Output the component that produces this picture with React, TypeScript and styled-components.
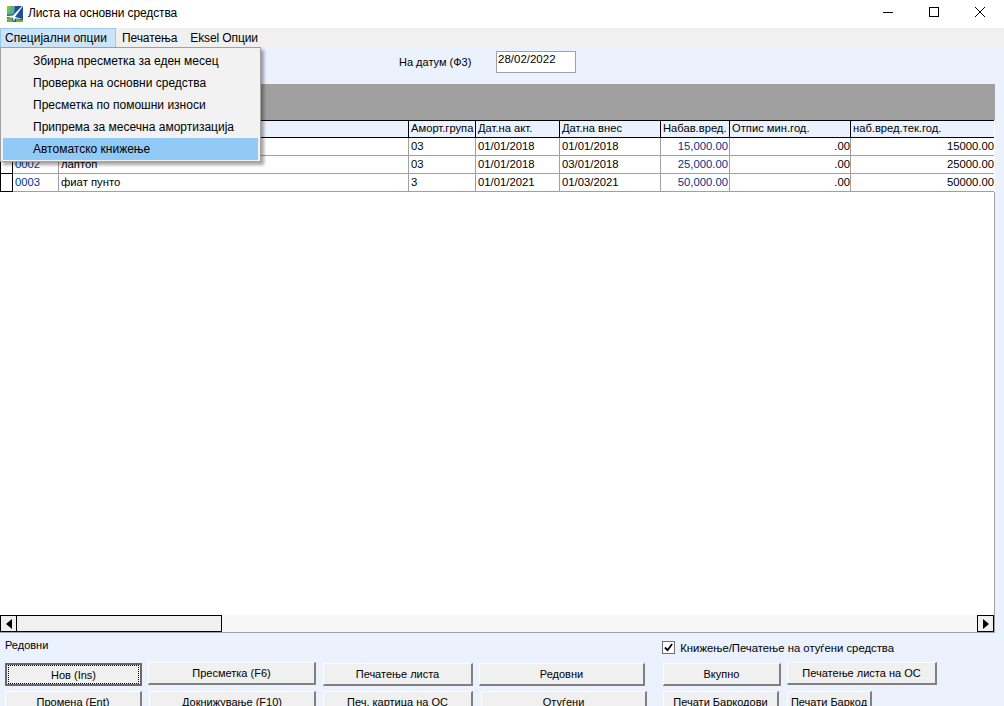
import React from 'react';
import styled, { createGlobalStyle } from 'styled-components';

const FONT = '"Liberation Sans", Arial, sans-serif';
const FORM_BG = '#ebf2fe';
const GRID_LINE = '#a0a0a0';
const CODE_BLUE = '#00358f';

const columns = [
  { title: 'Аморт.група', width: 67 },
  { title: 'Дат.на акт.', width: 84 },
  { title: 'Дат.на внес', width: 101 },
  { title: 'Набав.вред.', width: 69 },
  { title: 'Отпис мин.год.', width: 121 },
  { title: 'наб.вред.тек.год.', width: 143 },
];

const rows = [
  { code: '0001', name: '', group: '03', act: '01/01/2018', entry: '01/01/2018', value: '15,000.00', writeOff: '.00', current: '15000.00' },
  { code: '0002', name: 'лаптоп', group: '03', act: '01/01/2018', entry: '03/01/2018', value: '25,000.00', writeOff: '.00', current: '25000.00' },
  { code: '0003', name: 'фиат пунто', group: '3', act: '01/01/2021', entry: '01/03/2021', value: '50,000.00', writeOff: '.00', current: '50000.00' },
];

const menuItems = [
  'Збирна пресметка за еден месец',
  'Проверка на основни средства',
  'Пресметка по помошни износи',
  'Припрема за месечна амортизација',
  'Автоматско книжење',
];

export default function App() {
  return (
    <Window>
      <GlobalStyle />
      <TitleBar>
        <AppLogo viewBox="0 0 16 16">
          <rect width="16" height="16" fill="#1c4f9c" />
          <path d="M0 0 H8 L7 8 L0 9 Z" fill="#5aa9a0" />
          <path d="M0 0 H4 L3 6 L0 7 Z" fill="#7fc241" />
          <path d="M0 16 V12 L5 12 L6 16 Z" fill="#6bb536" />
          <path d="M9 16 L9 13 L16 14 V16 Z" fill="#6bb536" />
          <path d="M0 10 L6 9.5 L15 0 L16 0 L8 11 L16 13 L8 12.5 L7 16 L6 12 L0 11 Z" fill="#ffffff" />
        </AppLogo>
        <TitleText>Листа на основни средства</TitleText>
        <WindowControls>
          <ControlIcon viewBox="0 0 10 10">
            <path d="M0 5.5 H10" />
          </ControlIcon>
          <ControlIcon viewBox="0 0 10 10">
            <rect x="0.5" y="0.5" width="9" height="9" />
          </ControlIcon>
          <ControlIcon viewBox="0 0 10 10">
            <path d="M0 0 L10 10 M10 0 L0 10" />
          </ControlIcon>
        </WindowControls>
      </TitleBar>

      <MenuBar>
        <MenuTitle active>Специјални опции</MenuTitle>
        <MenuTitle>Печатења</MenuTitle>
        <MenuTitle>Eksel Опции</MenuTitle>
      </MenuBar>

      <DropMenu>
        {menuItems.map((item, i) => (
          <DropItem key={item} selected={i === menuItems.length - 1}>
            {item}
          </DropItem>
        ))}
      </DropMenu>

      <Form>
        <DateRow>
          <DateLabel>На датум (Ф3)</DateLabel>
          <DateInput>28/02/2022</DateInput>
        </DateRow>

        <Grid>
          <GrayBand />
          <HeaderRow>
            <HeaderSelector />
            <HeaderCell width={46} />
            <HeaderCell width={350} />
            {columns.map((col) => (
              <HeaderCell key={col.title} width={col.width}>
                {col.title}
              </HeaderCell>
            ))}
          </HeaderRow>
          {rows.map((row) => (
            <DataRow key={row.code}>
              <RowSelector />
              <Cell width={46} color={CODE_BLUE}>
                {row.code}
              </Cell>
              <Cell width={350}>{row.name}</Cell>
              <Cell width={67}>{row.group}</Cell>
              <Cell width={84}>{row.act}</Cell>
              <Cell width={101}>{row.entry}</Cell>
              <Cell width={69} right padRight={1} color={CODE_BLUE}>
                {row.value}
              </Cell>
              <Cell width={121} right>
                {row.writeOff}
              </Cell>
              <Cell width={143} right>
                {row.current}
              </Cell>
            </DataRow>
          ))}
          <GridEmpty />
          <ScrollBar>
            <ScrollButton>
              <Arrow viewBox="0 0 6 10">
                <path d="M6 0 V10 L0 5 Z" />
              </Arrow>
            </ScrollButton>
            <ScrollThumb />
            <ScrollTrack />
            <ScrollButton>
              <Arrow viewBox="0 0 6 10">
                <path d="M0 0 V10 L6 5 Z" />
              </Arrow>
            </ScrollButton>
          </ScrollBar>
        </Grid>

        <Footer>
          <StatusRow>
            <StatusText>Редовни</StatusText>
            <CheckLabel>
              <CheckBox>
                <svg viewBox="0 0 10 10" width="9" height="9">
                  <path d="M1 5 L4 8 L9 1" fill="none" stroke="#000" strokeWidth="2" />
                </svg>
              </CheckBox>
              Книжење/Печатење на отуѓени средства
            </CheckLabel>
          </StatusRow>
          <ButtonRow>
            <PushButton width={137} focused>
              <FocusText>Нов (Ins)</FocusText>
            </PushButton>
            <PushButton width={168} gap={6} raised>Пресметка (F6)</PushButton>
            <PushButton width={150} gap={7}>Печатење листа</PushButton>
            <PushButton width={166} gap={6}>Редовни</PushButton>
            <PushButton width={118} gap={18}>Вкупно</PushButton>
            <PushButton width={150} gap={6} raised>Печатење листа на ОС</PushButton>
          </ButtonRow>
          <ButtonRow>
            <PushButton width={137}>Промена (Ent)</PushButton>
            <PushButton width={167} gap={7}>Докнижување (F10)</PushButton>
            <PushButton width={150} gap={7}>Печ. картица на ОС</PushButton>
            <PushButton width={166} gap={8}>Отуѓени</PushButton>
            <PushButton width={116} gap={16}>Печати Баркодови</PushButton>
            <PushButton width={85} gap={8}>Печати Баркод</PushButton>
          </ButtonRow>
        </Footer>
      </Form>
    </Window>
  );
}

const GlobalStyle = createGlobalStyle`
  html, body {
    margin: 0;
    padding: 0;
    height: 100%;
    overflow: hidden;
    background: #ffffff;
  }
  #root {
    height: 100%;
  }
`;

const Window = styled.div`
  position: relative;
  width: 1004px;
  height: 706px;
  overflow: hidden;
  display: flex;
  flex-direction: column;
  font-family: ${FONT};
  font-size: 12px;
  color: #000;
  background: #fff;
`;

const TitleBar = styled.div`
  height: 28px;
  flex: none;
  display: flex;
  align-items: center;
  padding-left: 7px;
  background: #fff;
`;

const AppLogo = styled.svg`
  width: 16px;
  height: 16px;
  margin-right: 5px;
  margin-top: -1px;
`;

const TitleText = styled.span`
  font-size: 12px;
  letter-spacing: -0.12px;
  margin-top: -2px;
`;

const WindowControls = styled.div`
  margin-left: auto;
  display: flex;
  align-items: center;
  margin-top: -4px;
  padding-right: 19px;
  gap: 36px;
`;

const ControlIcon = styled.svg`
  width: 10px;
  height: 10px;
  fill: none;
  stroke: #000;
  stroke-width: 1;
  overflow: visible;
`;

const MenuBar = styled.div`
  height: 20px;
  flex: none;
  display: flex;
  background: #f0f0f0;
`;

const MenuTitle = styled.div<{ active?: boolean }>`
  display: flex;
  align-items: center;
  padding: 0 6px 0 ${(p) => (p.active ? '4px' : '5px')};
  box-sizing: border-box;
  letter-spacing: -0.1px;
  background: ${(p) => (p.active ? '#cce4f7' : 'transparent')};
  border: 1px solid ${(p) => (p.active ? '#99c9ef' : 'transparent')};
  &:first-child {
    width: 116px;
    letter-spacing: 0;
  }
`;

const DropMenu = styled.div`
  position: absolute;
  left: 0;
  top: 47px;
  width: 261px;
  height: 115px;
  box-sizing: border-box;
  padding: 2px;
  background: #f2f2f2;
  border: 1px solid #a0a0a0;
  box-shadow: 3px 3px 3px rgba(0, 0, 0, 0.35);
  z-index: 2;
`;

const DropItem = styled.div<{ selected?: boolean }>`
  height: 22px;
  line-height: 22px;
  padding-left: 30px;
  background: ${(p) => (p.selected ? '#91c9f7' : 'transparent')};
`;

const Form = styled.div`
  flex: 1;
  min-height: 0;
  display: flex;
  flex-direction: column;
  font-size: 11px;
  background: ${FORM_BG};
`;

const DateRow = styled.div`
  height: 36px;
  flex: none;
  display: flex;
  align-items: flex-start;
  padding: 3px 0 0 399px;
  box-sizing: border-box;
`;

const DateLabel = styled.span`
  width: 97px;
  margin-top: 5px;
`;

const DateInput = styled.div`
  width: 80px;
  height: 22px;
  box-sizing: border-box;
  padding: 0 1px;
  line-height: 15px;
  font-size: 11.5px;
  background: #fff;
  border: 1px solid #a0a0a0;
`;

const Grid = styled.div`
  width: 995px;
  height: 549px;
  flex: none;
  display: flex;
  flex-direction: column;
  background: #fff;
  border-bottom: 1px solid ${GRID_LINE};
  box-sizing: border-box;
`;

const GrayBand = styled.div`
  height: 36px;
  flex: none;
  background: #a0a0a0;
`;

const HeaderRow = styled.div`
  height: 18px;
  flex: none;
  width: 994px;
  display: flex;
  box-sizing: border-box;
  background: ${FORM_BG};
  border-top: 1px solid #000;
  border-bottom: 1px solid #000;
`;

const HeaderSelector = styled.div`
  width: 13px;
  flex: none;
  box-sizing: border-box;
  border-left: 1px solid #000;
  border-right: 1px solid #000;
`;

const HeaderCell = styled.div<{ width: number }>`
  width: ${(p) => p.width}px;
  flex: none;
  box-sizing: border-box;
  padding-left: 2px;
  line-height: 15px;
  font-size: 11.2px;
  white-space: nowrap;
  overflow: hidden;
  border-right: 1px solid #000;
  &:last-child {
    border-right: 0;
  }
`;

const DataRow = styled.div`
  height: 18px;
  flex: none;
  width: 994px;
  display: flex;
  box-sizing: border-box;
  border-bottom: 1px solid ${GRID_LINE};
`;

const RowSelector = styled.div`
  width: 13px;
  margin-bottom: -1px;
  flex: none;
  box-sizing: border-box;
  background: #fff;
  border-left: 1px solid #000;
  border-right: 1px solid #000;
  border-bottom: 1px solid #000;
`;

const Cell = styled.div<{ width: number; right?: boolean; padRight?: number; color?: string }>`
  width: ${(p) => p.width}px;
  flex: none;
  box-sizing: border-box;
  padding: 0 ${(p) => p.padRight || 0}px 0 2px;
  line-height: 17px;
  font-size: 11.3px;
  white-space: nowrap;
  overflow: hidden;
  text-align: ${(p) => (p.right ? 'right' : 'left')};
  color: ${(p) => p.color || '#000'};
  border-right: 1px solid ${GRID_LINE};
  &:last-child {
    border-right: 0;
  }
`;

const GridEmpty = styled.div`
  flex: 1;
  border-right: 1px solid ${GRID_LINE};
`;

const ScrollBar = styled.div`
  height: 17px;
  flex: none;
  display: flex;
  background: #fff;
  border-right: 1px solid ${GRID_LINE};
`;

const ScrollButton = styled.div`
  width: 17px;
  height: 17px;
  flex: none;
  display: flex;
  align-items: center;
  justify-content: center;
  box-sizing: border-box;
  background: #f0f0f0;
  border: 1px solid #000;
`;

const Arrow = styled.svg`
  width: 6px;
  height: 10px;
  fill: #000;
`;

const ScrollThumb = styled.div`
  width: 205px;
  flex: none;
  box-sizing: border-box;
  background: #f0f0f0;
  border: 1px solid #000;
  border-left: 0;
`;

const ScrollTrack = styled.div`
  flex: 1;
  background: repeating-conic-gradient(#f0f0f0 0 25%, #ffffff 0 50%) 0 0 / 2px 2px;
`;

const Footer = styled.div`
  flex: 1;
  min-height: 0;
  padding: 0 0 0 5px;
`;

const StatusRow = styled.div`
  height: 30px;
  display: flex;
  align-items: center;
  justify-content: space-between;
  padding-right: 110px;
`;

const StatusText = styled.span`
  margin-top: -6px;
`;

const CheckLabel = styled.label`
  display: flex;
  align-items: center;
  gap: 5px;
  font-size: 11.3px;
  margin-top: -1px;
`;

const CheckBox = styled.span`
  width: 13px;
  height: 13px;
  display: flex;
  align-items: center;
  justify-content: center;
  box-sizing: border-box;
  background: #fff;
  border: 1px solid #707070;
`;

const ButtonRow = styled.div`
  height: 28px;
  display: flex;
  align-items: flex-start;
`;

const PushButton = styled.div<{ width: number; gap?: number; focused?: boolean; raised?: boolean }>`
  width: ${(p) => p.width}px;
  height: 23px;
  flex: none;
  margin-left: ${(p) => p.gap || 0}px;
  margin-top: ${(p) => (p.raised ? '-1px' : '0')};
  display: flex;
  align-items: center;
  justify-content: center;
  box-sizing: border-box;
  white-space: nowrap;
  background: #f0f0f0;
  border-style: solid;
  border-width: ${(p) => (p.focused ? '2px' : '1px 2px 2px 1px')};
  border-color: ${(p) => (p.focused ? '#696969' : '#fdfdfd #808080 #808080 #fdfdfd')};
`;

const FocusText = styled.span`
  width: 100%;
  height: 100%;
  display: flex;
  align-items: center;
  justify-content: center;
  margin: 1px;
  box-sizing: border-box;
  border: 1px dotted #000;
`;
